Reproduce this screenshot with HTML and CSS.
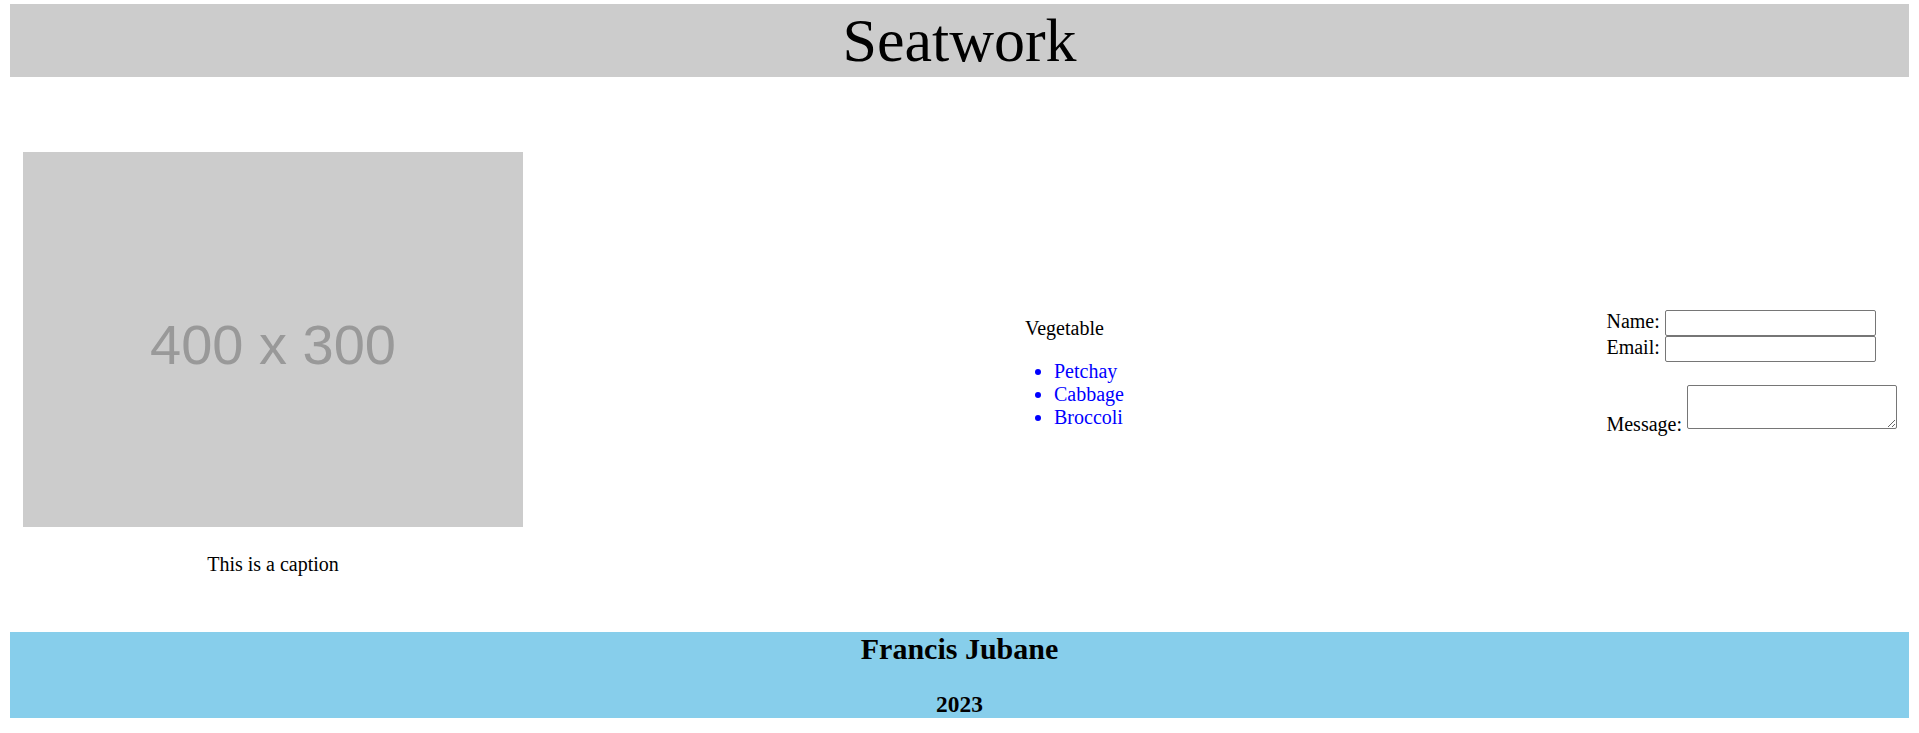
FILE: index.html
```html
<!DOCTYPE html>
<html lang="en">
<head>
<meta charset="utf-8">
<title>Seatwork</title>
<link rel="stylesheet" href="styles.css">
</head>
<body>
<header class="header">
  <h1 class="title">Seatwork</h1>
</header>
<main class="main">
  <figure class="col-figure">
    <svg class="placeholder" width="500" height="375" viewBox="0 0 500 375" xmlns="http://www.w3.org/2000/svg">
      <rect width="500" height="375" fill="#cccccc"/>
      <text x="250" y="212" text-anchor="middle" font-family="Liberation Sans, Arial, sans-serif" font-size="56" fill="#999999">400 x 300</text>
    </svg>
    <figcaption class="caption">This is a caption</figcaption>
  </figure>
  <section class="col-list">
    <p class="list-title">Vegetable</p>
    <ul class="veg-list">
      <li>Petchay</li>
      <li>Cabbage</li>
      <li>Broccoli</li>
    </ul>
  </section>
  <form class="col-form">
    Name: <input class="field" type="text"><br>
    Email: <input class="field" type="email"><br><br>
    Message: <textarea class="message"></textarea>
  </form>
</main>
<footer class="footer">
  <h2 class="author">Francis Jubane</h2>
  <h3 class="year">2023</h3>
</footer>
</body>
</html>
```
FILE: styles.css
```css
html, body {
  background: #ffffff;
}
body {
  margin: 4px 10px 0;
  font-family: "Liberation Serif", "Times New Roman", serif;
  font-size: 20px;
  line-height: 23px;
  color: #000000;
}
.header {
  background: #cccccc;
  text-align: center;
}
.title {
  margin: 0;
  font-size: 62px;
  font-weight: normal;
  line-height: 73px;
}
.main {
  display: flex;
  align-items: center;
  padding: 75px 12px 39px 13px;
}
.col-figure {
  margin: 0;
  width: 500px;
  flex: none;
}
.placeholder {
  display: block;
}
.caption {
  margin: 26px 0 17px;
  text-align: center;
  line-height: 23px;
}
.col-list {
  margin-left: 502px;
}
.list-title {
  margin: 0;
}
.veg-list {
  margin: 20px 0 0;
  padding-left: 29px;
  color: #0000ff;
}
.col-form {
  margin-left: auto;
  line-height: 23px;
}
.field {
  box-sizing: border-box;
  width: 211px;
  height: 26px;
  margin: 0;
  padding: 1px 2px;
  border: 1px solid #767676;
  border-radius: 2px;
  font: 16.67px "Liberation Sans", Arial, sans-serif;
  background: #ffffff;
}
.message {
  box-sizing: border-box;
  width: 210px;
  height: 44px;
  margin: 0;
  padding: 2px;
  border: 1px solid #767676;
  border-radius: 2px;
  font: 16.67px "Liberation Mono", monospace;
  vertical-align: 2px;
  background: #ffffff;
}
.footer {
  background: #87ceeb;
  text-align: center;
  padding: 0;
}
.author {
  margin: 0;
  font-size: 30px;
  line-height: 34px;
  font-weight: bold;
}
.year {
  margin: 24.6px 0 0;
  font-size: 23.4px;
  line-height: 27px;
  font-weight: bold;
}
```
